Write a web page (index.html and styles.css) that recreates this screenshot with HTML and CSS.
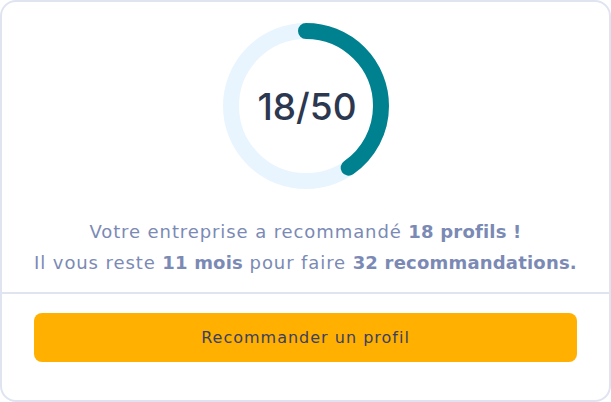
FILE: index.html
```html
<!DOCTYPE html>
<html lang="fr">
<head>
<meta charset="utf-8">
<link rel="stylesheet" href="styles.css">
</head>
<body>
<div class="card">
  <div class="top">
    <div class="gauge">
      <svg width="170" height="170" viewBox="0 0 170 170">
        <circle cx="85" cy="85" r="75" fill="none" stroke="#e9f5fe" stroke-width="16"/>
        <circle cx="85" cy="85" r="75" fill="none" stroke="#00818f" stroke-width="16" stroke-linecap="round" stroke-dasharray="190 471.2" transform="rotate(-90 85 85)"/>
      </svg>
      <span class="count">18/50</span>
    </div>
    <p class="msg">Votre entreprise a recommandé <b>18 profils !</b><br>Il vous reste <b>11 mois</b> pour faire <b>32 recommandations.</b></p>
  </div>
  <div class="bottom">
    <button class="cta">Recommander un profil</button>
  </div>
</div>
</body>
</html>
```
FILE: styles.css
```css
html, body { margin: 0; padding: 0; background: #fff; }
body { font-family: "DejaVu Sans", "Noto Sans", sans-serif; }
.card {
  box-sizing: border-box;
  width: 611px;
  height: 402px;
  border: 2px solid #dfe4f0;
  border-radius: 16px;
  background: #fff;
  display: flex;
  flex-direction: column;
}
.top {
  display: flex;
  flex-direction: column;
  align-items: center;
  padding-top: 19px;
  padding-bottom: 14px;
  border-bottom: 2px solid #dfe4f0;
}
.gauge {
  position: relative;
  width: 170px;
  height: 170px;
}
.gauge svg { display: block; }
.count {
  position: absolute;
  inset: 0;
  display: flex;
  align-items: center;
  justify-content: center;
  padding-left: 3px;
  font-family: "Inter", sans-serif;
  font-size: 37px;
  font-weight: 500;
  color: #2c3850;
}
.msg {
  margin: 25px 0 0;
  text-align: center;
  font-size: 18px;
  line-height: 31px;
  letter-spacing: 0.9px;
  color: #7b8ab5;
}
.msg b { font-weight: 700; letter-spacing: 0.2px; }
.bottom {
  padding: 19px 32px 0;
}
.cta {
  width: 100%;
  height: 49px;
  border: 0;
  border-radius: 8px;
  background: #ffb000;
  color: #3b4060;
  font-family: inherit;
  font-size: 16px;
  letter-spacing: 1px;
  font-weight: 400;
}
```
